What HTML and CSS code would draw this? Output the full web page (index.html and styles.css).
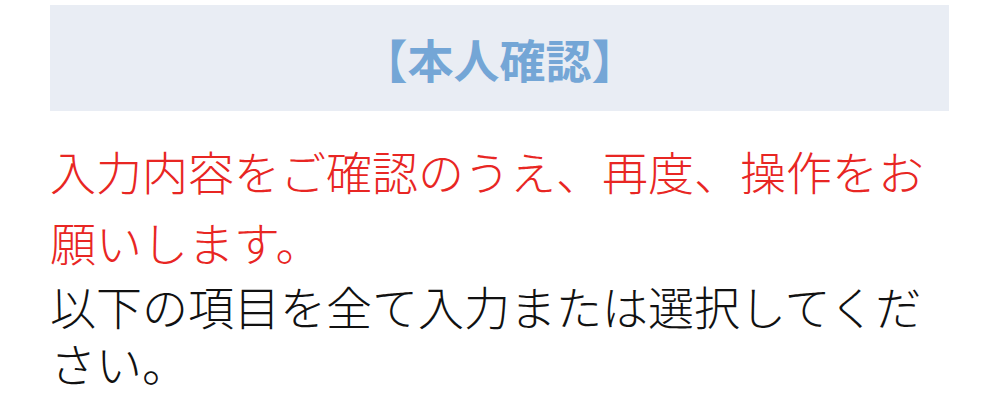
FILE: index.html
```html
<!DOCTYPE html>
<html lang="ja">
<head>
<meta charset="utf-8">
<title>本人確認</title>
<link rel="stylesheet" href="styles.css">
</head>
<body>
<main class="page">
  <header class="title-bar">
    <h1 class="title">【本人確認】</h1>
  </header>
  <p class="error">入力内容をご確認のうえ、再度、操作をお願いします。</p>
  <p class="note">以下の項目を全て入力または選択してください。</p>
</main>
</body>
</html>
```
FILE: styles.css
```css
html, body {
  margin: 0;
  padding: 0;
  background: #ffffff;
}
body {
  font-family: "Noto Sans CJK JP", "Noto Sans", sans-serif;
}
.page {
  padding: 5px 50px 0;
  width: 899px;
}
.title-bar {
  height: 106px;
  background: #e9edf4;
  display: flex;
  align-items: center;
  justify-content: center;
}
.title {
  margin: 0;
  font-size: 46px;
  font-weight: 700;
  color: #74a6d6;
  line-height: 1;
}
.error {
  margin: 24px 0 0;
  font-size: 46px;
  font-weight: 300;
  line-height: 71px;
  color: #e82623;
}
.note {
  margin: 0;
  font-size: 46px;
  font-weight: 300;
  line-height: 57px;
  color: #111111;
}
```
